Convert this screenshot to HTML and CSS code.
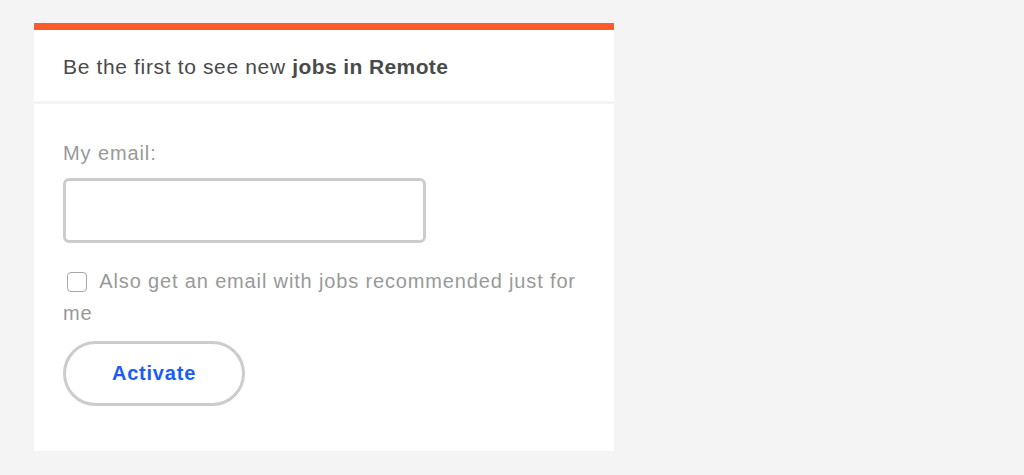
FILE: index.html
```html
<!DOCTYPE html>
<html lang="en">

<head>
	<meta charset="UTF-8">
	<meta name="viewport" content="width=device-width, initial-scale=1.0">
	<title>Job Alert</title>
	<link rel="stylesheet" href="styles.css">
</head>

<body>

	<div class="alert-card">
		<div class="alert-head">
			<h2>Be the first to see new <strong>jobs in Remote</strong></h2>
		</div>
		<form class="alert-form">
			<label for="email" class="field-label">My email:</label>
			<input type="email" id="email" name="email">
			<label class="check-row">
				<input type="checkbox" name="recommended">
				<span>Also get an email with jobs recommended just for me</span>
			</label>
			<button type="submit">Activate</button>
		</form>
	</div>

</body>

</html>
```

FILE: styles.css
```css
/* Basic reset and styling */
* {
	margin: 0;
	padding: 0;
	box-sizing: border-box;
}

body {
	background-color: #f4f4f4;
	font-family: "Liberation Sans", Arial, sans-serif;
	padding: 23px 0 0 34px;
}

.alert-card {
	width: 580px;
	border-top: 7px solid #ff5a2b;
}

.alert-head {
	background-color: #fff;
	height: 71px;
	display: flex;
	align-items: center;
	padding: 3px 29px 0;
	margin-bottom: 3px;
}

h2 {
	font-size: 21px;
	letter-spacing: 0.65px;
	font-weight: normal;
	color: #4a4a4a;
}

h2 strong {
	font-weight: bold;
	letter-spacing: 0.4px;
}

.alert-form {
	background-color: #fff;
	padding: 38px 29px 45px;
	display: flex;
	flex-direction: column;
	align-items: flex-start;
}

.field-label {
	font-size: 20px;
	letter-spacing: 0.9px;
	line-height: 22px;
	color: #999;
	margin-bottom: 14px;
}

input[type="email"] {
	width: 363px;
	height: 65px;
	border: 3px solid #ccc;
	border-radius: 6px;
	outline: none;
	font-size: 18px;
	padding: 0 12px;
}

.check-row {
	margin-top: 22px;
	font-size: 20px;
	letter-spacing: 0.85px;
	line-height: 32px;
	color: #999;
}

.check-row input {
	appearance: none;
	-webkit-appearance: none;
	width: 20px;
	height: 20px;
	border: 1.5px solid #a8a8a8;
	border-radius: 4px;
	background-color: #fff;
	margin: 0 7px 0 4px;
	vertical-align: -4px;
}

button {
	margin-top: 12px;
	width: 182px;
	height: 65px;
	background-color: #fff;
	border: 3px solid #ccc;
	border-radius: 33px;
	color: #1a5cf6;
	font-family: inherit;
	font-size: 20px;
	letter-spacing: 0.8px;
	font-weight: bold;
	cursor: pointer;
}
```
